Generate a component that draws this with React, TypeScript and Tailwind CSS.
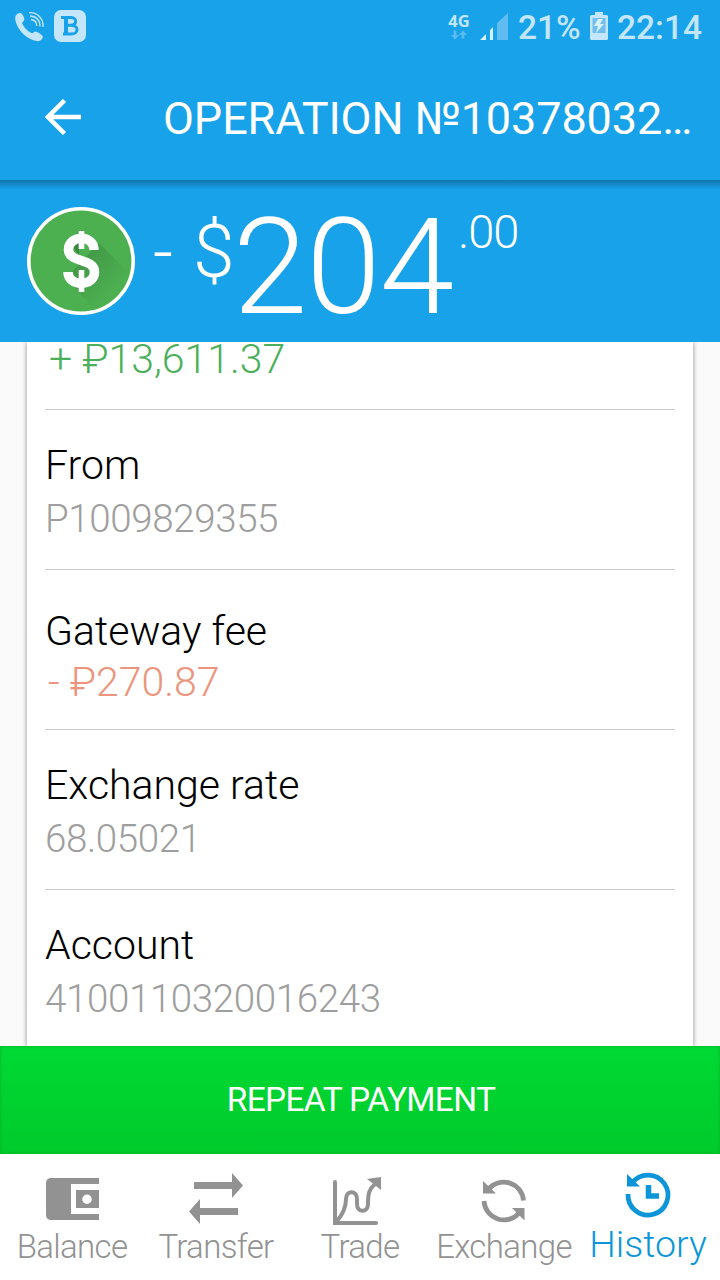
import type { ReactNode } from "react";

function StatusBar() {
  return (
    <div className="flex h-[54px] items-start justify-between pl-[14px] pr-[18px] text-[#c3e6fa]">
      <div className="flex pt-[10px]">
        <svg width="30" height="32" viewBox="0 0 30 32" fill="currentColor">
          <path d="M1.5 6C3 3.5 5.5 2.5 7 3.3C9 5 10.2 7.2 10.4 9.4C10 11.5 7.8 12 8.2 13.6C9.6 17 13 21 17.2 23C19 23.3 19.6 21.8 21.3 21.4C24 21.8 28 24.5 28.8 26.5C28.8 29 26.5 31 24 31.2C17 30.8 9 25.5 5 18.8C2.5 14.5 .4 9.5 1.5 6Z" />
          <g fill="none" stroke="currentColor" strokeWidth="1.4">
            <path d="M15.2 2.7C23 2 29.8 8.5 29 17" />
            <path d="M16 6C22 6 26.3 10.3 26 16.5" />
            <path d="M17 9.5C20.5 10 22.8 12.5 22.7 16" />
          </g>
        </svg>
        <div className="ml-[10px] flex size-8 items-center justify-center rounded-[7px] bg-[#c3e6fa]">
          <svg width="20" height="22" viewBox="0 0 20 22" className="ml-[2px]" fill="none" stroke="#18a2ea" strokeWidth="3">
            <path d="M0 2.5H10C16.5 2.5 16 10.3 10 10.3H6M10 10.3C18 10.3 18 19 10 19H2" />
            <path d="M5 2.5V19" strokeWidth="4" />
          </svg>
        </div>
      </div>
      <div className="flex items-start">
        <div className="mr-[10px] flex w-[22px] flex-col items-center pt-[12px]">
          <span className="font-['Open_Sans',sans-serif] text-[16.5px] font-bold leading-[17px]">4G</span>
          <svg width="16" height="10" viewBox="0 0 18 10" className="mt-px" fill="#5cbcf0">
            <path d="M3 0H6V5H9L4.5 10L0 5H3ZM12 9H15V5H18L13.5 0L9 5H12Z" />
          </svg>
        </div>
        <svg width="29" height="28" viewBox="0 0 29 28" className="mr-[9px] mt-[12px]">
          <path d="M0 28L6 22V28ZM10 18L13 15V28H10Z" fill="#d8f1fc" />
          <path d="M17 11L28 1V28H17Z" fill="#61bdf1" />
        </svg>
        <span className="w-[72px] whitespace-nowrap pt-[8px] text-[33.5px] font-medium leading-[40px]">21%</span>
        <svg width="18" height="28" viewBox="0 0 18 28" className="mr-[9px] mt-[12px]">
          <path d="M5 0H13V3H16.5Q18 3 18 4.5V26.5Q18 28 16.5 28H1.5Q0 28 0 26.5V4.5Q0 3 1.5 3H5Z" fill="#c3e6fa" />
          <path d="M2.5 6H15.5V21H2.5Z" fill="#70bfee" />
          <path d="M8 7H13L10 12H14L6 21L8 14H4Z" fill="#d8f1fc" />
        </svg>
        <span className="whitespace-nowrap pt-[8px] text-[33.5px] font-medium leading-[40px]">22:14</span>
      </div>
    </div>
  );
}

function AmountHeader() {
  return (
    <section className="relative flex h-[162px] shrink-0 items-start bg-[#18a2ea] pl-[27px] text-white">
      <div className="absolute inset-x-0 top-0 h-[9px] bg-gradient-to-b from-[#1075aa] to-[#18a2ea]" />
      <svg width="108" height="108" viewBox="0 0 108 108" className="mt-[27px]">
        <defs>
          <linearGradient id="shade" x1="0" y1="0" x2="1" y2="1">
            <stop offset="0" stopColor="#3f8f42" />
            <stop offset=".75" stopColor="#4caf50" />
          </linearGradient>
        </defs>
        <circle cx="54" cy="54" r="52.2" fill="#4caf50" />
        <path d="M72 36L101 65A49 49 0 0 1 66 101L39 71Z" fill="url(#shade)" />
        <path d="M46 40L52 36V48Z" fill="#3a873d" />
        <circle cx="54" cy="54" r="52.2" fill="none" stroke="white" strokeWidth="3.6" />
        <g fill="none" stroke="white">
          <path d="M67 43C67 27 41 28 41.5 43C42 56 67.5 51 67.5 65C67.5 80 41 80 41 65" strokeWidth="9.5" />
          <path d="M54.5 24V42M54.5 63V85" strokeWidth="5.6" />
        </g>
      </svg>
      <span className="ml-[18px] mt-[36px] w-[41px] text-[70px] font-light leading-[72px]">-</span>
      <span className="-ml-px mt-[31px] w-[40px] text-[75px] font-light leading-[80px]">$</span>
      <span className="mt-[13px] whitespace-nowrap text-[134px] font-light leading-[150px] tracking-[-1px]">204</span>
      <span className="ml-[5px] mt-[24px] text-[47px] font-light leading-[56px] tracking-[-1px]">.00</span>
    </section>
  );
}

function Row({ label, value, last }: { label: string; value: string; last?: boolean }) {
  return (
    <div className={last ? "h-[160px] pt-[31px]" : "h-[160px] border-b border-[#cccccc] pt-[31px]"}>
      <div className="text-[41px] leading-[48px] text-black">{label}</div>
      <div className="mt-[6px] text-[38.5px] leading-[48px] tracking-[-0.38px] text-[#9e9e9e]">{value}</div>
    </div>
  );
}

function NavItem({ label, children, active }: { label: string; children: ReactNode; active?: boolean }) {
  return (
    <div className={active ? "flex w-36 flex-col items-center text-[#0c96d9]" : "flex w-36 flex-col items-center text-[#929292]"}>
      <div className="flex h-[70px] items-end">{children}</div>
      <span className={active ? "-mt-px text-[37.5px] leading-[42px]" : "pt-[2px] text-[33px] leading-[42px] tracking-[-0.65px]"}>{label}</span>
    </div>
  );
}

export default function App() {
  return (
    <div className="flex h-[1280px] w-[720px] flex-col overflow-hidden bg-[#fafafa] font-[Roboto,sans-serif]">
      <header className="h-[180px] shrink-0 bg-[#18a2ea]">
        <StatusBar />
        <div className="flex h-[126px] items-center pl-[45px] text-white">
          <svg width="37" height="36" viewBox="0 0 37 36" fill="none" stroke="currentColor" strokeWidth="4.5">
            <path d="M36 18H3M19.5 1.5L3 18L19.5 34.5" />
          </svg>
          <h1 className="ml-[81px] whitespace-nowrap pt-[3px] text-[45px] leading-[54px] tracking-[-0.1px]">OPERATION №10378032…</h1>
        </div>
      </header>
      <AmountHeader />
      <main className="h-[704px] shrink-0 px-[27px] font-light">
        <div className="h-[704px] bg-white px-[18px] shadow-[0_0_5px_rgba(0,0,0,0.45)]">
          <div className="h-[68px] border-b border-[#cccccc] pl-[4px] text-[41px] leading-[34px] text-[#4caf5c]">
            + ₽13,611.37
          </div>
          <Row label="From" value="P1009829355" />
          <div className="h-[160px] border-b border-[#cccccc] pt-[37px]">
            <div className="text-[41px] leading-[48px] text-black">Gateway fee</div>
            <div className="mt-[3px] pl-[3px] text-[41px] leading-[48px] text-[#eb957d]">- ₽270.87</div>
          </div>
          <Row label="Exchange rate" value="68.05021" />
          <Row label="Account" value="4100110320016243" last />
        </div>
      </main>
      <button className="relative flex h-[108px] shrink-0 items-center justify-center bg-gradient-to-b from-[#00d934] to-[#00cb2c] pl-[2px] pt-px text-[33.5px] tracking-[-0.7px] text-white shadow-[inset_0_0_3px_rgba(0,90,20,0.35)]">
        REPEAT PAYMENT
      </button>
      <nav className="relative flex h-[126px] shrink-0 bg-white font-light">
        <NavItem label="Balance">
          <svg width="53" height="42" viewBox="0 0 53 42" className="mb-[4px]" fill="currentColor">
            <path d="M4 0H53V6H25V36H53V42H4Q0 41 0 37V5Q0 1 4 0Z" />
            <path fillRule="evenodd" d="M30 12H53V30H30ZM41 16.5A4.7 4.7 0 1 0 41 26A4.7 4.7 0 1 0 41 16.5Z" />
          </svg>
        </NavItem>
        <NavItem label="Transfer">
          <svg width="54" height="51" viewBox="0 0 54 51" fill="currentColor">
            <path d="M5 9H43V0L54 12.5L43 25V16H5ZM49 35H11V26L0 38.5L11 51V42H49Z" />
          </svg>
        </NavItem>
        <NavItem label="Trade">
          <svg width="48" height="49" viewBox="0 0 48 49" className="mb-[-2px] ml-[-7px]" fill="none" stroke="currentColor" strokeWidth="4">
            <path d="M2 5V46H43" strokeLinecap="round" />
            <path d="M4 44C10 37 13 31 13 22C13 13 24 13 24 22V27C24 36 35 36 35 27C35 17 36 12 42 7" />
            <path d="M0 40V48H8ZM34 2L48 0V13Z" fill="currentColor" stroke="none" />
          </svg>
        </NavItem>
        <NavItem label="Exchange">
          <svg width="46" height="46" viewBox="0 0 46 46" fill="none" stroke="currentColor" strokeWidth="4.8">
            <path d="M7 11.5A20 20 0 0 1 42.5 22.5M38.5 34.5A20 20 0 0 1 3 23" />
            <path d="M2 3V15.5H15ZM43.5 42.5V30H31Z" fill="currentColor" stroke="none" />
          </svg>
        </NavItem>
        <NavItem label="History" active>
          <svg width="46" height="46" viewBox="0 0 46 46" className="mb-[6px] overflow-visible" fill="none" stroke="currentColor" strokeWidth="4.8">
            <path d="M7 11A20 20 0 1 1 3 22" />
            <path d="M2 2V14.5H15Z" fill="currentColor" stroke="none" />
            <path d="M23.5 13V24H34" strokeWidth="5.5" />
          </svg>
        </NavItem>
      </nav>
    </div>
  );
}
